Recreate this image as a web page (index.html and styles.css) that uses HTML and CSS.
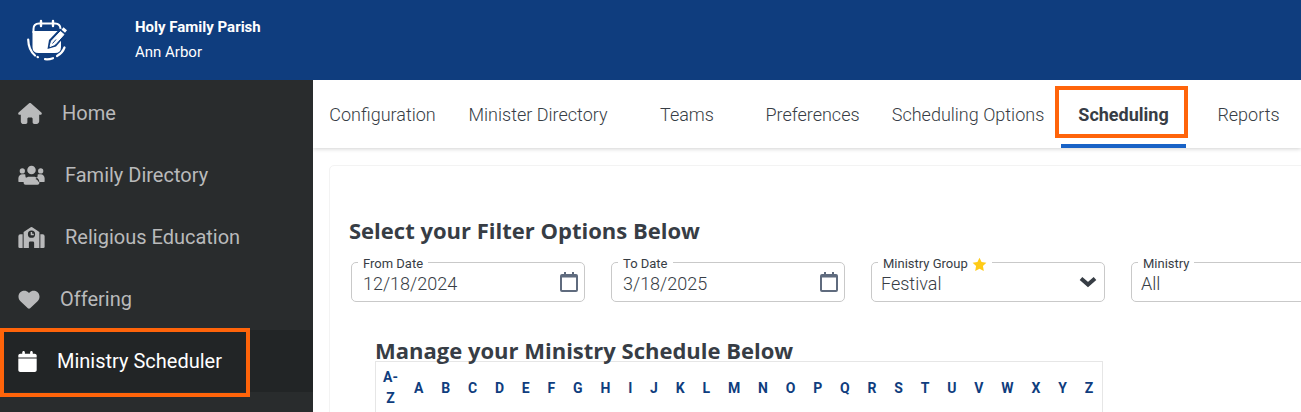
FILE: index.html
```html
<!DOCTYPE html>
<html lang="en">
<head>
    <meta charset="UTF-8">
    <meta name="viewport" content="width=device-width, initial-scale=1.0">
    <title>Ministry Scheduler</title>
    <link rel="stylesheet" href="styles.css">
</head>
<body>
    <header class="topbar">
        <svg class="logo" viewBox="0 0 40 42" aria-hidden="true">
            <path d="M6.500 14V10Q6.500 4.500 12 4.500H28Q33.500 4.500 33.500 10" fill="none" stroke="#fff" stroke-width="2"/>
            <path d="M14 2V7M26 2V7" stroke="#fff" stroke-width="2.400" stroke-linecap="round"/>
            <path d="M5.500 12H34V28Q34 34 28 34H11.500Q5.500 34 5.500 28Z" fill="#fff"/>
            <path d="M22 21L33 9.500L40 15L29 27.500L20.500 30Z" class="logo-gap"/>
            <path d="M24.500 22L33.500 12.500L37 15.500L28 25.500L23 27.500Z" fill="#fff" stroke="#fff" stroke-linejoin="round"/>
            <path d="M25.500 24.500L29 20.500" class="logo-line"/>
            <path d="M35.500 9.500L39 12.500" stroke="#fff" stroke-width="3"/>
            <path d="M1.200 20.500Q1.500 31 8 36.500M10.500 38L11 38.200M18 40.200Q22 40.700 26 39.200M30 37Q35.500 34 37.500 28.500" fill="none" stroke="#fff" stroke-width="2.200" stroke-linecap="round"/>
        </svg>
        <div class="parish">
            <strong>Holy Family Parish</strong>
            <span>Ann Arbor</span>
        </div>
    </header>
    <div class="layout">
        <nav class="sidebar">
            <a href="#">
                <svg class="icon-home" viewBox="0 0 576 512" aria-hidden="true"><path d="M575.800 255.500c0 18-15 32.100-32 32.100h-32l.7 160.200c0 35-28 64-64 64H392c-22 0-40-18-40-40V384c0-18-14-32-32-32h-64c-18 0-32 14-32 32v88c0 22-18 40-40 40h-56c-36 0-64-28-64-64V287.600H32c-18 0-32-14-32-32.100 0-9 3-17 10-24L266.400 8c7-7 15-8 22-8s15 2 21 7l255.400 224.500c8 7 12 15 11 24z"/></svg>
                Home
            </a>
            <a href="#">
                <svg class="icon-wide" viewBox="0 0 640 512" aria-hidden="true"><circle cx="96" cy="144" r="64"/><circle cx="544" cy="144" r="64"/><circle cx="320" cy="124" r="104"/><path d="M0 352v-32c0-53 43-96 96-96h40c12 0 23 3 33 7-4 60 20 90 55 113-40 14-65 42-78 72H22c-12 0-22-10-22-22zM640 352v-32c0-53-43-96-96-96h-40c-12 0-23 3-33 7 4 60-20 90-55 113 40 14 65 42 78 72h124c12 0 22-10 22-22zM128 432c0-86 58-144 144-144h96c86 0 144 58 144 144 0 32-18 48-48 48H176c-30 0-48-16-48-48z"/></svg>
                Family Directory
            </a>
            <a href="#">
                <svg class="icon-wide" viewBox="0 0 640 512" aria-hidden="true"><path fill-rule="evenodd" d="M128 120L302 8q18-12 36 0l174 112v392H384V384q0-32-32-32h-64q-32 0-32 32v128H128zM320 88a88 88 0 1 0 0 176a88 88 0 1 0 0-176zM0 224q0-48 48-48h56v336H32q-32 0-32-32zM536 176h56q48 0 48 48v256q0 32-32 32h-72z"/><path d="M300 120h36v44h40v36h-76z"/></svg>
                Religious Education
            </a>
            <a href="#">
                <svg class="icon-heart" viewBox="0 0 512 512" aria-hidden="true"><path d="M47.600 300.400L228.300 469.100c7.500 7 17.400 10.900 27.700 10.900s20.200-3.900 27.700-10.900L464.400 300.400c30.400-28.300 47.600-68 47.600-109.500v-5.800c0-69.900-50.500-129.500-119.400-141C347 36.500 300.600 51.400 268 84L256 96 244 84c-32.600-32.600-79-47.500-124.600-39.900C50.500 55.600 0 115.200 0 185.100v5.800c0 41.500 17.200 81.200 47.600 109.500z"/></svg>
                Offering
            </a>
            <a href="#" class="active" aria-current="page">
                <svg class="icon-calendar" viewBox="0 0 448 512" aria-hidden="true"><path d="M96 32V64H48C21.500 64 0 85.500 0 112v48H448V112c0-26.500-21.500-48-48-48H352V32c0-17.700-14.300-32-32-32s-32 14.300-32 32V64H160V32c0-17.700-14.300-32-32-32S96 14.300 96 32zM448 184H0V464c0 26.500 21.500 48 48 48H400c26.500 0 48-21.500 48-48V184z"/></svg>
                Ministry Scheduler
                <span class="highlight"></span>
            </a>
        </nav>
        <main>
            <nav class="tabs">
                <a href="#">Configuration</a>
                <a href="#">Minister Directory</a>
                <a href="#">Teams</a>
                <a href="#">Preferences</a>
                <a href="#">Scheduling Options</a>
                <a href="#" class="active" aria-current="page">Scheduling<span class="highlight"></span></a>
                <a href="#">Reports</a>
            </nav>
            <div class="card">
                <h2>Select your Filter Options Below</h2>
                <form class="filters">
                    <div class="field">
                        <label for="fromDate">From Date</label>
                        <input type="text" id="fromDate" value="12/18/2024">
                        <button type="button" aria-label="Choose from date">
                            <svg viewBox="0 0 18 20"><rect x="1" y="3" width="16" height="16" rx="1"/><path d="M1 4.500H17M5 0V4M13 0V4"/></svg>
                        </button>
                    </div>
                    <div class="field">
                        <label for="toDate">To Date</label>
                        <input type="text" id="toDate" value="3/18/2025">
                        <button type="button" aria-label="Choose to date">
                            <svg viewBox="0 0 18 20"><rect x="1" y="3" width="16" height="16" rx="1"/><path d="M1 4.500H17M5 0V4M13 0V4"/></svg>
                        </button>
                    </div>
                    <div class="field">
                        <label for="ministryGroup">Ministry Group
                            <svg class="star" viewBox="0 0 24 24" aria-hidden="true"><path d="M12 1L15.300 8L23 9L17.500 14.500L18.900 22.500L12 18.800L5.100 22.500L6.500 14.500L1 9L8.700 8Z"/></svg>
                        </label>
                        <select id="ministryGroup"><option>Festival</option></select>
                        <svg class="chevron" viewBox="0 0 18 12" aria-hidden="true"><path d="M2 2.500L9 8.500L16 2.500"/></svg>
                    </div>
                    <div class="field">
                        <label for="ministry">Ministry</label>
                        <select id="ministry"><option>All</option></select>
                        <svg class="chevron" viewBox="0 0 18 12" aria-hidden="true"><path d="M2 2.500L9 8.500L16 2.500"/></svg>
                    </div>
                </form>
                <section class="schedule">
                    <h2>Manage your Ministry Schedule Below</h2>
                    <div class="letters">
                        <a href="#" class="all">A-Z</a>
                        <a href="#">A</a><a href="#">B</a><a href="#">C</a><a href="#">D</a><a href="#">E</a><a href="#">F</a><a href="#">G</a>
                        <a href="#">H</a><a href="#">I</a><a href="#">J</a><a href="#">K</a><a href="#">L</a><a href="#">M</a><a href="#">N</a>
                        <a href="#">O</a><a href="#">P</a><a href="#">Q</a><a href="#">R</a><a href="#">S</a><a href="#">T</a><a href="#">U</a>
                        <a href="#">V</a><a href="#">W</a><a href="#">X</a><a href="#">Y</a><a href="#">Z</a>
                    </div>
                </section>
            </div>
        </main>
    </div>
</body>
</html>
```
FILE: styles.css
```css
* {
    box-sizing: border-box;
}
body {
    margin: 0;
    height: 100vh;
    display: flex;
    flex-direction: column;
    overflow: hidden;
    font-family: Roboto, "Liberation Sans", sans-serif;
    color: #373d45;
    background: #fff;
}
a {
    color: inherit;
    text-decoration: none;
}
.topbar {
    display: flex;
    align-items: center;
    gap: 68px;
    flex: none;
    height: 80px;
    padding: 0 27px;
    background: #0f3d7e;
    color: #fff;
}
.logo {
    width: 40px;
    height: 42px;
}
.logo-gap {
    fill: #0f3d7e;
}
.logo-line {
    stroke: #0f3d7e;
}
.parish {
    display: flex;
    flex-direction: column;
    font-size: 15px;
    line-height: 25px;
}
.layout {
    display: flex;
    flex: 1;
    min-height: 0;
}
.sidebar {
    flex: none;
    width: 313px;
    padding-top: 2px;
    background: #292c2d;
}
.sidebar a {
    position: relative;
    display: flex;
    align-items: center;
    gap: 20px;
    height: 62px;
    padding-left: 18px;
    font-size: 20px;
    color: #b9babb;
}
.sidebar svg {
    flex: none;
    height: 21px;
    fill: currentColor;
}
.sidebar .icon-home {
    width: 24px;
}
.sidebar .icon-wide {
    width: 27px;
}
.sidebar .icon-heart {
    width: 22px;
}
.sidebar .icon-calendar {
    width: 19px;
}
.sidebar .active {
    background: #222526;
    color: #fff;
}
.highlight {
    position: absolute;
    border: 4px solid #ff640a;
}
.sidebar .highlight {
    top: -2px;
    bottom: -5px;
    left: 0;
    width: 250px;
}
main {
    flex: 1;
    min-width: 0;
    overflow: hidden;
}
.tabs {
    display: grid;
    grid-template-columns: 139px 172px 126px 125px 186px 125px 125px;
    height: 68px;
    font-size: 18px;
    font-weight: 300;
    box-shadow: 0 1px 4px rgba(0,0,0,0.18);
}
.tabs a {
    position: relative;
    display: flex;
    align-items: center;
    justify-content: center;
}
.tabs .active {
    padding-top: 4px;
    border-bottom: 4px solid #1862c6;
    font-weight: 700;
}
.tabs .highlight {
    top: 6px;
    bottom: 6px;
    left: -6px;
    right: -2px;
}
.card {
    width: 1100px;
    height: 400px;
    margin: 17px 0 0 16px;
    padding: 54px 19px 0;
    border: 1px solid #f3f3f3;
    border-radius: 5px;
}
h2 {
    margin: 0;
    font-family: "Open Sans", sans-serif;
    font-size: 22px;
    font-weight: 700;
    line-height: 20px;
}
.filters {
    display: grid;
    grid-template-columns: repeat(4, 234px);
    gap: 26px;
    margin: 22px 0 0 2px;
}
.field {
    position: relative;
    display: flex;
    align-items: center;
    height: 40px;
    border: 1px solid #c9c9c9;
    border-radius: 5px;
}
.field label {
    position: absolute;
    top: -7px;
    left: 6px;
    display: flex;
    align-items: center;
    gap: 4px;
    padding: 0 5px;
    background: #fff;
    font-size: 13px;
    line-height: 16px;
}
.star {
    width: 15px;
    height: 15px;
    fill: #ffcb17;
}
.field input,
.field select {
    flex: 1;
    min-width: 0;
    height: 38px;
    padding: 2px 0 0 11px;
    border: 0;
    outline: 0;
    background: none;
    appearance: none;
    color: inherit;
    font: 300 18px Roboto, sans-serif;
}
.field select {
    padding-left: 9px;
}
.field button {
    display: flex;
    padding: 0 6px;
    border: 0;
    background: none;
}
.field button svg {
    width: 18px;
    height: 20px;
    fill: none;
    stroke: #5f6b7e;
    stroke-width: 2;
}
.chevron {
    position: absolute;
    right: 7px;
    width: 18px;
    height: 12px;
    fill: none;
    stroke: #373d45;
    stroke-width: 4;
    pointer-events: none;
}
.schedule {
    margin: 38px 0 0 26px;
}
.schedule h2 {
    padding-bottom: 1px;
}
.letters {
    display: flex;
    align-items: center;
    max-width: 728px;
    height: 60px;
    padding-bottom: 6px;
    border: 1px solid #e6e6e6;
    color: #0f3d7e;
    font-size: 14px;
    font-weight: 700;
    line-height: 21px;
    text-align: center;
}
.letters a {
    flex: 1 1 auto;
}
.letters .all {
    flex: none;
    width: 29px;
    padding: 0 6px;
}
```
